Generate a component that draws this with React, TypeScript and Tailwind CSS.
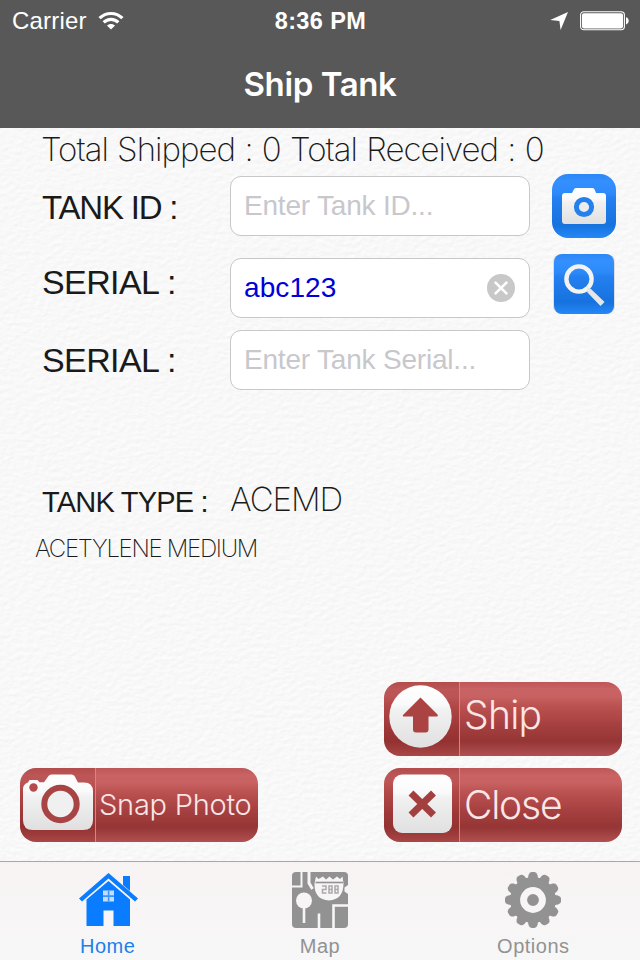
import React from "react";

const helv = "font-['Liberation_Sans',Arial,sans-serif]";
const thin = "font-[Inter,'Liberation_Sans',sans-serif]";

function PaperTexture() {
  return (
    <svg className="absolute inset-0 -z-10 h-full w-full" aria-hidden="true">
      <filter id="paper" x="0" y="0" width="100%" height="100%" colorInterpolationFilters="sRGB">
        <feTurbulence type="fractalNoise" baseFrequency="0.16 0.24" numOctaves="4" seed="7" result="noise" />
        <feDiffuseLighting in="noise" surfaceScale="0.13" diffuseConstant="1.049" lightingColor="#fff">
          <feDistantLight azimuth="60" elevation="68" />
        </feDiffuseLighting>
      </filter>
      <rect width="100%" height="100%" filter="url(#paper)" />
    </svg>
  );
}

function StatusBar() {
  return (
    <div className="grid h-10 grid-cols-3 items-center pl-3 pr-[11px]">
      <div className="flex items-center gap-[11px]">
        <span className="text-[24px] leading-[42px] tracking-[0.2px]">Carrier</span>
        <svg width="26" height="20" viewBox="0 0 26 20" fill="none" stroke="#fff" strokeWidth="3.2">
          <path d="M1.6 7.2C8 .9 18 .9 24.4 7.2" />
          <path d="M5.7 11.4c4.1-4.1 10.5-4.1 14.6 0" />
          <path d="M13 18.6 8.9 14.5c2.3-2.1 5.9-2.1 8.2 0z" fill="#fff" stroke="none" />
        </svg>
      </div>
      <span className="text-center text-[23.5px] font-bold leading-[42px] tracking-[0.4px]">8:36 PM</span>
      <div className="flex items-center justify-end gap-3">
        <svg width="18" height="18" viewBox="0 0 18 18" fill="#fff">
          <path d="M18 0 .2 8l9.2 1 1.2 9z" />
        </svg>
        <svg width="49" height="20" viewBox="0 0 49 20">
          <rect x=".6" y=".8" width="43.8" height="18" rx="3.2" fill="none" stroke="#fff" strokeWidth="1.1" />
          <rect x="2" y="2.2" width="41" height="15.2" rx="1.8" fill="#fff" />
          <path d="M46 6.2c3.6.8 3.6 6.4 0 7.2z" fill="#fff" />
        </svg>
      </div>
    </div>
  );
}

function Field({ children }: { children: React.ReactNode }) {
  return (
    <div className="flex h-[60px] w-[300px] items-center justify-between rounded-[11px] border border-[#c8c8c8] bg-white pl-[13px] pr-[13px] text-[28px] tracking-[-0.2px] text-[#c7c7cc]">
      {children}
    </div>
  );
}

function CameraButton() {
  return (
    <button className="ml-[22px] h-16 w-16">
      <svg width="64" height="64" viewBox="0 0 64 64">
        <defs>
          <linearGradient id="blue" x1="0" y1="0" x2="0" y2="1">
            <stop offset="0" stopColor="#2a87f5" />
            <stop offset=".12" stopColor="#3490ff" />
            <stop offset=".3" stopColor="#2d8afa" />
            <stop offset=".38" stopColor="#2480ef" />
            <stop offset=".8" stopColor="#1672dd" />
            <stop offset="1" stopColor="#2488f8" />
          </linearGradient>
          <linearGradient id="silver" x1="0" y1="0" x2="0" y2="1">
            <stop offset="0" stopColor="#fff" />
            <stop offset=".3" stopColor="#fafafa" />
            <stop offset=".4" stopColor="#f1f1f1" />
            <stop offset="1" stopColor="#e0e0e0" />
          </linearGradient>
        </defs>
        <rect width="64" height="64" rx="16" fill="url(#blue)" />
        <path
          d="M13 19h7l2-3.800q.8-1.200 2.200-1.200h16q1.600 0 2.300 1.200l1.500 3.800h7q3 0 3 3v25q0 3-3 3H13q-3 0-3-3V22q0-3 3-3z"
          fill="url(#silver)"
        />
        <circle cx="32" cy="33" r="7.600" fill="#ececec" stroke="#2480ec" strokeWidth="5" />
      </svg>
    </button>
  );
}

function SearchButton() {
  return (
    <button className="-mt-2 ml-[23px] h-[62px] w-[62px]">
      <svg width="62" height="62" viewBox="0 0 62 62">
        <rect y="1" width="62" height="60" rx="8" fill="#dedede" />
        <rect x="1" y="1" width="60" height="60" rx="8" fill="url(#blue)" />
        <circle cx="26" cy="26" r="12.600" fill="none" stroke="#f3f3f3" strokeWidth="4.400" />
        <path d="m35 35 3 2 12.500 12-3 3L35 39z" fill="#e6e6e6" stroke="#e6e6e6" strokeWidth="1.500" />
      </svg>
    </button>
  );
}

function RedButton({ icon, children }: { icon: React.ReactNode; children: React.ReactNode }) {
  return (
    <button className={`${thin} flex h-[74px] w-[238px] overflow-hidden rounded-[16px] bg-[linear-gradient(#be5656,#c96464_10%,#c86161_20%,#ba5050_34%,#a43f3f_60%,#963535_80%,#a84848_94%,#b25050)] text-left font-[360] text-[#fbe6e6]`}>
      <span className="h-full w-[76px] shrink-0 border-r border-[#d88484] bg-[#8a2525]/20">{icon}</span>
      {children}
    </button>
  );
}

const ShipIcon = (
  <svg width="75" height="74" viewBox="0 0 75 74">
    <circle cx="36.500" cy="34.500" r="31.200" fill="url(#silver)" />
    <path d="M36.500 15.500 53.500 32.500q1 2-1 2H44.500v13q0 3-3 3H32q-3 0-3-3V34.500h-8.500q-3 0-1-2z" fill="#ab4343" />
  </svg>
);

const CloseIcon = (
  <svg width="75" height="74" viewBox="0 0 75 74">
    <rect x="9" y="6.500" width="59" height="58.500" rx="9" fill="url(#silver)" />
    <path d="m27 25 22.500 22M49.500 25 27 47" stroke="#a43f3f" strokeWidth="7" />
  </svg>
);

const SnapIcon = (
  <svg width="75" height="74" viewBox="0 0 75 74">
    <path
      d="M8 14.500 9.500 12h8l2 2.300H24L28.500 8q1-1.500 3-1.500h20q2 0 3 1.500l3.500 6.500h6q9 0 9 9V52q0 10-10 10H13Q3 62 3 52V21q0-5 5-6.500z"
      fill="url(#silver)"
    />
    <circle cx="13.500" cy="19.500" r="4.200" fill="#b54b4b" />
    <circle cx="40.500" cy="36" r="16.200" fill="#f0f0f0" stroke="#a94444" strokeWidth="6" />
  </svg>
);

function HomeIcon() {
  return (
    <svg width="60" height="56" viewBox="0 0 60 56" fill="#0a7cff">
      <path d="M45 4h7v15l-7-6z" />
      <path d="M30.500 1 60 26.500l-3 3-26.500-23-26.500 23-3-3z" />
      <path d="M30.500 9 52 27.500V54H35.500V38.500h-10V54H8.500V27.500z" />
      <path d="M25 18.500h11v11H25z" fill="#c4ddfb" />
      <path d="M29.800 18.500h1.600v11h-1.600zM25 23.300h11v1.600H25z" fill="#3b95fc" />
    </svg>
  );
}

function MapIcon() {
  return (
    <svg width="56" height="56" viewBox="0 0 56 56">
      <rect width="56" height="56" rx="4" fill="#929292" />
      <g fill="none" stroke="#f7f5f5">
        <path d="M0 14.500h9.500V0" strokeWidth="2" />
        <path d="M17 0v11l3.500 6" strokeWidth="3" />
        <path d="M12 29v22" strokeWidth="2.600" />
        <path d="M27 56V41.500M41.500 56V33.500H56" strokeWidth="2.600" />
      </g>
      <path d="M56 13l-3.500 2.500v4L56 22z" fill="#f7f5f5" />
      <circle cx="12" cy="28.500" r="8" fill="#f7f5f5" />
      <path d="M24 4.500l2.500 2.500 4.500-2.500 3 3 3.500-3 3.500 3 4-3 3 2.500 2.500-2.500 1 7q0 16-14.500 17Q22 27.500 22.500 11.500z" fill="#f7f5f5" />
      <path d="M23.500 10.500h27.500" stroke="#929292" strokeWidth="1.600" />
      <g fill="none" stroke="#aaa" strokeWidth="1.500">
        <path d="M30 14h4v3.500h-3.500V21H34.500" />
        <path d="M37 14h3v7h-3zM43 14h3v7h-3zM37 17.500h3M43 17.500h3" />
      </g>
    </svg>
  );
}

const teeth = Array.from({ length: 12 }, (_, i) => i * 30);

function GearIcon() {
  return (
    <svg width="56" height="56" viewBox="0 0 56 56" fill="#929292">
      <circle cx="28" cy="28" r="23" />
      {teeth.map((a) => (
        <path key={a} d="M22.500 9l1-6Q24.500 0 26.500 0h3q2 0 3 3l1 6z" transform={`rotate(${a} 28 28)`} />
      ))}
      <circle cx="28" cy="28" r="9.400" stroke="#f7f5f5" strokeWidth="7" />
    </svg>
  );
}

function Tab({ icon, label, active }: { icon: React.ReactNode; label: string; active?: boolean }) {
  return (
    <div className={active ? "flex flex-col items-center pl-[2px] text-[#1c80ea]" : "flex flex-col items-center text-[#929292]"}>
      {icon}
      <span className="mt-[6px] text-[20px] leading-6 tracking-[0.5px]">{label}</span>
    </div>
  );
}

export default function App() {
  return (
    <div className={`${helv} relative isolate flex h-[960px] w-[640px] flex-col overflow-hidden bg-[#f7f7f7] whitespace-nowrap text-[#1a1a1a]`}>
      <PaperTexture />
      <header className="h-32 bg-[#585858] text-white">
        <StatusBar />
        <h1 className={`${thin} mt-[22px] text-center text-[33px] font-semibold leading-[44px] tracking-[-0.4px]`}>Ship Tank</h1>
      </header>

      <main className="flex flex-1 flex-col">
        <p className={`${thin} pl-[41px] text-[33px] font-extralight leading-[42px] tracking-[-0.98px] [word-spacing:1px]`}>
          Total Shipped : 0 Total Received : 0
        </p>
        <div className="mt-1 flex h-16 items-center">
          <label className="mt-[3px] w-[230px] pl-[42px] text-[33px] tracking-[-1.2px]">TANK ID :</label>
          <Field>Enter Tank ID...</Field>
          <CameraButton />
        </div>
        <div className="mt-5 flex h-[60px] items-center">
          <label className="mb-3 w-[230px] pl-[42px] text-[34px] tracking-[-0.6px]">SERIAL :</label>
          <Field>
            <span className="tracking-[0.1px] text-[#0000d8]">abc123</span>
            <svg width="30" height="30" viewBox="0 0 30 30">
              <circle cx="15" cy="15" r="14" fill="#c8c8c8" />
              <path d="m8.800 8.800 12.400 12.400M21.200 8.800 8.800 21.200" stroke="#fff" strokeWidth="2.600" />
            </svg>
          </Field>
          <SearchButton />
        </div>
        <div className="mt-3 flex h-[60px] items-center">
          <label className="w-[230px] pl-[42px] text-[34px] tracking-[-0.6px]">SERIAL :</label>
          <Field>Enter Tank Serial...</Field>
        </div>
        <div className="mt-[88px] flex h-11 items-center">
          <span className="mt-[6px] w-[230px] pl-[42px] text-[29px] tracking-[-0.8px]">TANK TYPE :</span>
          <span className={`${thin} text-[33px] font-extralight tracking-[-1.1px]`}>ACEMD</span>
        </div>
        <p className={`${thin} mt-3 pl-[35px] text-[24px] font-extralight leading-[30px] tracking-[-1.3px]`}>ACETYLENE MEDIUM</p>
        <div className="mt-[118px] flex flex-col gap-3 pl-5 pr-[18px]">
          <div className="flex justify-end">
            <RedButton icon={ShipIcon}>
              <span className="pl-1 text-[39px] leading-[66px] tracking-[-0.7px]">Ship</span>
            </RedButton>
          </div>
          <div className="flex justify-between">
            <RedButton icon={SnapIcon}>
              <span className="pl-[3px] text-[29px] leading-[74px] tracking-[-0.25px]">Snap Photo</span>
            </RedButton>
            <RedButton icon={CloseIcon}>
              <span className="pl-1 text-[39px] leading-[74px] tracking-[-1.2px]">Close</span>
            </RedButton>
          </div>
        </div>
      </main>

      <nav className="grid h-[99px] grid-cols-3 border-t border-[#aaa7a7] bg-linear-to-b from-[#f8f3f3] to-[#f7f7f8] pt-[10px]">
        <Tab icon={<HomeIcon />} label="Home" active />
        <Tab icon={<MapIcon />} label="Map" />
        <Tab icon={<GearIcon />} label="Options" />
      </nav>
    </div>
  );
}
